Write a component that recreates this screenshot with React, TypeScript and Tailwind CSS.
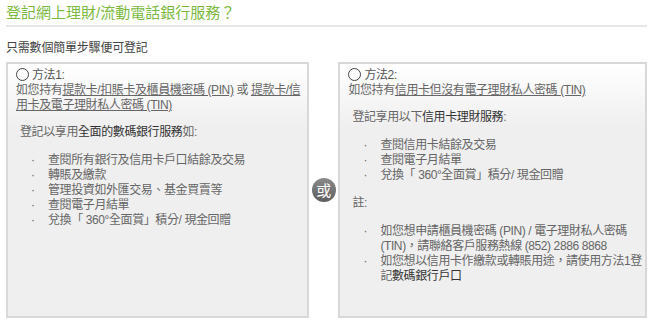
const font = { fontFamily: '"Liberation Sans", "Noto Sans CJK TC", sans-serif' };

function Bullet({ children }: { children: React.ReactNode }) {
  return (
    <li className="flex">
      <span className="w-[17px] shrink-0">·</span>
      <span>{children}</span>
    </li>
  );
}

function Radio() {
  return <span className="inline-block w-[13px] h-[13px] rounded-full border border-[#444] mr-[3px] align-[-2px]" />;
}

export default function App() {
  return (
    <div className="w-[653px] h-[327px] bg-white text-[12px] leading-[15px] text-[#666]" style={font}>
      <div className="px-[6px] pt-[4px]">
        <h1 className="text-[15px] leading-[18px] text-[#7cba3f] pb-[3px] border-b-2 border-[#e6e6e6]">
          登記網上理財/流動電話銀行服務？
        </h1>
        <p className="mt-[14px] text-[#444] tracking-[-0.2px]">只需數個簡單步驟便可登記</p>

        <div className="mt-[6px] flex items-center tracking-[-0.4px]">
          <div className="w-[305px] h-[256px] border-2 border-[#d8d8d8] bg-gradient-to-b from-white to-[#efefef] from-[0%] to-[25%] pl-[8px] pr-[1px] pt-[4px]">
            <div className="text-[#555]"><Radio />方法1:</div>
            <div>
              如您持有<span className="underline">提款卡/扣賬卡及櫃員機密碼 (PIN)</span> 或 <span className="underline">提款卡/信用卡及電子理財私人密碼 (TIN)</span>
            </div>
            <p className="mt-[12px] pl-[4px]">登記以享用<span className="text-[#333]">全面的數碼銀行服務</span>如:</p>
            <ul className="mt-[13px] pl-[15px]">
              <Bullet>查閱所有銀行及信用卡戶口結餘及交易</Bullet>
              <Bullet>轉賬及繳款</Bullet>
              <Bullet>管理投資如外匯交易、基金買賣等</Bullet>
              <Bullet>查閱電子月結單</Bullet>
              <Bullet>兌換「 360°全面賞」積分/ 現金回贈</Bullet>
            </ul>
          </div>

          <div className="w-[30px] flex justify-center">
            <span className="w-[24px] h-[24px] rounded-full bg-gradient-to-b from-[#8a8a8a] to-[#5e5e5e] text-white text-[15px] flex items-center justify-center">或</span>
          </div>

          <div className="w-[311px] h-[256px] border-2 border-[#d8d8d8] bg-gradient-to-b from-white to-[#efefef] from-[0%] to-[25%] pl-[8px] pr-[1px] pt-[4px]">
            <div className="text-[#555]"><Radio />方法2:</div>
            <div>
              如您持有<span className="underline">信用卡但沒有電子理財私人密碼 (TIN)</span>
            </div>
            <p className="mt-[12px] pl-[4px]">登記享用以下<span className="text-[#333]">信用卡理財服務</span>:</p>
            <ul className="mt-[13px] pl-[15px]">
              <Bullet>查閱信用卡結餘及交易</Bullet>
              <Bullet>查閱電子月結單</Bullet>
              <Bullet>兌換「 360°全面賞」積分/ 現金回贈</Bullet>
            </ul>
            <p className="mt-[13px] pl-[4px]">註:</p>
            <ul className="mt-[13px] pl-[15px]">
              <Bullet>如您想申請櫃員機密碼 (PIN) / 電子理財私人密碼 (TIN)，請聯絡客戶服務熱線 (852) 2886 8868</Bullet>
              <Bullet>如您想以信用卡作繳款或轉賬用途，請使用方法1登記<span className="text-[#333]">數碼銀行戶口</span></Bullet>
            </ul>
          </div>
        </div>
      </div>
    </div>
  );
}
